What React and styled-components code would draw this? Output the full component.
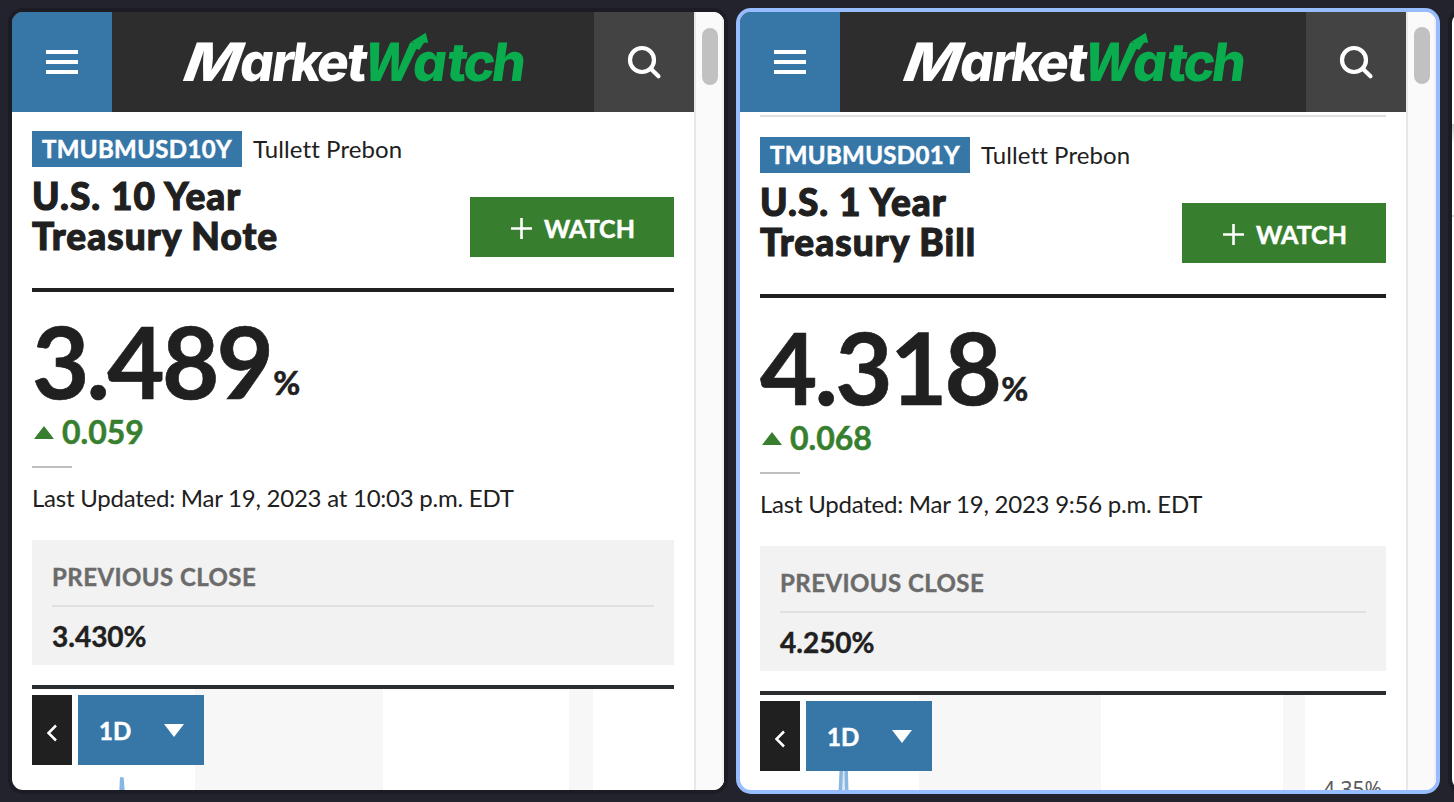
import React from 'react';
import styled, { createGlobalStyle } from 'styled-components';

const GlobalStyles = createGlobalStyle`
  * {
    box-sizing: border-box;
  }

  body {
    margin: 0;
    overflow: hidden;
    background-color: #23232d;
    color: #202020;
    font-family: Lato, 'Open Sans', sans-serif;
    font-variant-ligatures: none;
  }
`;

const Desktop = styled.main`
  display: flex;
  gap: 8px;
  width: 1454px;
  height: 802px;
  padding: 8px 0 8px 8px;
  overflow: hidden;
`;

const Frame = styled.section`
  display: flex;
  flex: none;
  width: ${({ $width }) => $width}px;
  height: 786px;
  border: 4px solid ${({ $active }) => ($active ? '#98bdff' : '#1b1c24')};
  border-radius: 15px;
  background-color: #ffffff;
  overflow: hidden;
`;

const Page = styled.div`
  flex: 1;
  display: flex;
  flex-direction: column;
  min-width: 0;
  overflow: hidden;
`;

const Scrollbar = styled.div`
  flex: none;
  width: 30px;
  padding: ${({ $offset }) => $offset}px 0 0 6px;
  border-left: 2px solid #e8e8e8;
  border-right: 2px solid #f0f0f0;
  background-color: #fafafa;
`;

const Thumb = styled.div`
  width: 16px;
  height: 57px;
  border-radius: 8px;
  background-color: #c1c1c1;
`;

const Header = styled.header`
  flex: none;
  display: flex;
  height: 100px;
  background-color: #2d2d2d;
`;

const HeaderButton = styled.button`
  display: flex;
  align-items: center;
  justify-content: center;
  width: 100px;
  height: 100px;
  padding: 0;
  border: none;
  background-color: ${({ $color }) => $color};
`;

const Brand = styled.div`
  flex: 1;
  display: flex;
  justify-content: center;
`;

const Drawing = styled.svg`
  display: block;
  overflow: visible;
`;

const LogoText = styled.text`
  font-family: Inter, sans-serif;
  font-size: 53px;
  font-weight: 800;
  font-feature-settings: 'cv11';
`;

const Content = styled.div`
  flex: none;
  padding: ${({ $ruled }) => ($ruled ? '3px' : '0')} 20px 0;
`;

const TopRule = styled.div`
  height: 2px;
  margin-bottom: 1px;
  background-color: #dedede;
`;

const TickerRow = styled.div`
  display: flex;
  gap: 11px;
  padding-top: 19px;
  font-size: 24px;
  line-height: 36px;
  letter-spacing: 0.1px;
`;

const Ticker = styled.span`
  width: 210px;
  padding-left: 10px;
  background-color: #3777a8;
  color: #ffffff;
  font-weight: 700;
  letter-spacing: 0.35px;
  -webkit-text-stroke: 0.5px #ffffff;
`;

const TitleRow = styled.div`
  display: flex;
  justify-content: space-between;
  align-items: flex-end;
  height: 90px;
`;

const Title = styled.h1`
  width: 300px;
  height: 81px;
  margin: 0;
  font-size: 37px;
  font-weight: 900;
  line-height: 40px;
  letter-spacing: 1.05px;
  -webkit-text-stroke: 1.1px #202020;
`;

const WatchButton = styled.button`
  display: flex;
  align-items: center;
  gap: 12px;
  width: 204px;
  height: 60px;
  padding: 2px 0 0 41px;
  border: none;
  background-color: #377f2e;
  color: #ffffff;
  font-family: inherit;
  font-size: 25px;
  font-weight: 700;
  -webkit-text-stroke: 0.5px #ffffff;
`;

const Rule = styled.div`
  height: 4px;
  margin-top: ${({ $gap }) => $gap}px;
  background-color: ${({ $color }) => $color};
`;

const Price = styled.div`
  display: flex;
  height: 100px;
  margin-top: 18px;
  font-size: 99px;
  font-weight: 700;
  line-height: 101px;
  letter-spacing: -2.8px;
  -webkit-text-stroke: 0.6px #202020;
`;

const Unit = styled.span`
  margin-left: 2px;
  padding-top: 52px;
  font-size: 33px;
  line-height: 40px;
  letter-spacing: 0;
`;

const Change = styled.div`
  display: flex;
  align-items: center;
  gap: 8px;
  height: 40px;
  margin-top: 2px;
  padding-left: 2px;
  color: #377f2e;
  font-size: 32px;
  font-weight: 700;
  line-height: 40px;
  -webkit-text-stroke: 0.5px #377f2e;
`;

const ShortRule = styled.div`
  width: 40px;
  height: 2px;
  margin: 14px 0 15px;
  background-color: #c0c0c0;
`;

const Updated = styled.div`
  font-size: 24px;
  line-height: 30px;
  letter-spacing: -0.24px;
  white-space: nowrap;
`;

const CloseBox = styled.div`
  height: 125px;
  margin-top: 27px;
  padding: 22px 20px 12px;
  background-color: #f2f2f2;
`;

const CloseLabel = styled.div`
  height: 45px;
  border-bottom: 2px solid #e0e0e0;
  color: #6b6b6b;
  font-size: 24px;
  font-weight: 700;
  line-height: 30px;
  letter-spacing: 0.43px;
  -webkit-text-stroke: 0.4px #6b6b6b;
`;

const CloseValue = styled.div`
  margin-top: 12px;
  font-size: 28px;
  font-weight: 700;
  line-height: 34px;
  -webkit-text-stroke: 0.4px #202020;
`;

const Chart = styled.div`
  position: relative;
  height: 130px;
`;

const Plot = styled.svg`
  position: absolute;
  top: 0;
  left: 0;
`;

const AxisLabel = styled.text`
  font-family: 'Noto Sans', sans-serif;
  font-size: 21px;
  fill: #5c5c5c;
`;

const ChartTools = styled.div`
  position: relative;
  display: flex;
  gap: 6px;
  padding-top: 6px;
`;

const BackButton = styled.button`
  display: flex;
  align-items: center;
  justify-content: center;
  width: 40px;
  height: 70px;
  padding: 6px 0 0;
  border: none;
  background-color: #202020;
`;

const RangeSelect = styled.button`
  display: flex;
  align-items: center;
  justify-content: space-between;
  width: 126px;
  height: 70px;
  padding: 0 20px 0 21px;
  border: none;
  background-color: #3777a8;
  color: #ffffff;
  font-family: inherit;
  font-size: 24px;
  font-weight: 700;
  -webkit-text-stroke: 0.5px #ffffff;
`;

const Sliver = styled.div`
  width: 20px;
  height: 100%;
  padding-top: 112px;
`;

const SliverBar = styled.div`
  height: 93px;
  border-bottom: 2px solid #dedede;
  background: linear-gradient(#cfcfcf, #ffffff 20px);
`;

const quotes = [
  {
    ticker: 'TMUBMUSD10Y',
    title: ['U.S. 10 Year', 'Treasury Note'],
    price: '3.489',
    change: '0.059',
    updated: 'Mar 19, 2023 at 10:03 p.m. EDT',
    close: '3.430%',
    width: 720,
    thumb: 16,
    bands: [[163, 188], [537, 24]],
    line: 'M89 104 L89.6 90 L90 88.5 L91 104',
  },
  {
    ticker: 'TMUBMUSD01Y',
    title: ['U.S. 1 Year', 'Treasury Bill'],
    price: '4.318',
    change: '0.068',
    updated: 'Mar 19, 2023 9:56 p.m. EDT',
    close: '4.250%',
    width: 704,
    thumb: 15,
    active: true,
    bands: [[159, 182], [523, 22]],
    line: 'M80 104 L81.5 70 L86 70 L87 104',
    axis: '4.35%',
  },
];

const MenuIcon = () => (
  <svg width="32" height="24" fill="#fff">
    <path d="M0 0h32v4H0zM0 10h32v4H0zM0 20h32v4H0z" />
  </svg>
);

const SearchIcon = () => (
  <svg width="36" height="36" fill="none" stroke="#fff" strokeWidth="4.2">
    <circle cx="16" cy="16" r="12" />
    <path d="M25 25l7.5 7.200" strokeLinecap="round" />
  </svg>
);

const Letter = ({ x, scale = 1, skew = -8, children }) => (
  <LogoText transform={`translate(${x} 69) skewX(${skew}) scale(${scale} 1)`}>{children}</LogoText>
);

const Logo = () => (
  <Drawing width="340" height="100" aria-label="MarketWatch">
    <g fill="#fff">
      <Letter x={-3.5} skew={-20} scale={1.12}>M</Letter>
      <Letter x={55}>a</Letter>
      <Letter x={87}>r</Letter>
      <Letter x={106} scale={0.96}>k</Letter>
      <Letter x={132}>e</Letter>
      <Letter x={162}>t</Letter>
    </g>
    <g fill="#0aad4e">
      <Letter x={177} skew={-13} scale={0.92}>W</Letter>
      <Letter x={228}>a</Letter>
      <Letter x={262}>t</Letter>
      <Letter x={278.5}>c</Letter>
      <Letter x={307}>h</Letter>
      <path d="M227.500 30.300l15.200-9.600 2.600 10.100h-4.300l-4.500 7-8-2 3-5.500z" />
    </g>
  </Drawing>
);

const Quote = ({ quote }) => (
  <Frame $width={quote.width} $active={quote.active}>
    <Page>
      <Header>
        <HeaderButton $color="#3777a8"><MenuIcon /></HeaderButton>
        <Brand><Logo /></Brand>
        <HeaderButton $color="#434343"><SearchIcon /></HeaderButton>
      </Header>
      <Content $ruled={quote.active}>
        {quote.active && <TopRule />}
        <TickerRow>
          <Ticker>{quote.ticker}</Ticker>
          <span>Tullett Prebon</span>
        </TickerRow>
        <TitleRow>
          <Title>{quote.title[0]}<br />{quote.title[1]}</Title>
          <WatchButton>
            <svg width="21" height="21" stroke="#fff" strokeWidth="2.6">
              <path d="M10.5 0v21M0 10.5h21" />
            </svg>
            WATCH
          </WatchButton>
        </TitleRow>
        <Rule $gap={31} $color="#202020" />
        <Price>{quote.price}<Unit>%</Unit></Price>
        <Change>
          <svg width="20" height="13" fill="#377f2e"><path d="M0 13L10 0l10 13z" /></svg>
          {quote.change}
        </Change>
        <ShortRule />
        <Updated>Last Updated: {quote.updated}</Updated>
        <CloseBox>
          <CloseLabel>PREVIOUS CLOSE</CloseLabel>
          <CloseValue>{quote.close}</CloseValue>
        </CloseBox>
        <Rule $gap={20} $color="#292d30" />
        <Chart>
          <Plot width="642" height="130">
            {quote.bands.map(([x, width]) => (
              <rect key={x} x={x} width={width} height="130" fill="#f7f7f7" />
            ))}
            <path d={quote.line} fill="#dfe7f1" stroke="#89b7e3" strokeWidth="3.5" />
            {quote.axis && <AxisLabel x="563" y="102" textLength="59">{quote.axis}</AxisLabel>}
          </Plot>
          <ChartTools>
            <BackButton>
              <svg width="12" height="18" fill="none" stroke="#fff" strokeWidth="2.5">
                <path d="M10 1.5L2.500 9l7.500 7.500" />
              </svg>
            </BackButton>
            <RangeSelect>
              1D
              <svg width="20" height="13" fill="#fff"><path d="M0 0h20L10 13z" /></svg>
            </RangeSelect>
          </ChartTools>
        </Chart>
      </Content>
    </Page>
    <Scrollbar $offset={quote.thumb}><Thumb /></Scrollbar>
  </Frame>
);

const App = () => (
  <>
    <GlobalStyles />
    <Desktop>
      {quotes.map((quote) => (
        <Quote key={quote.ticker} quote={quote} />
      ))}
      <Frame $width={40}>
        <Sliver>
          <SliverBar />
        </Sliver>
      </Frame>
    </Desktop>
  </>
);

export default App;
